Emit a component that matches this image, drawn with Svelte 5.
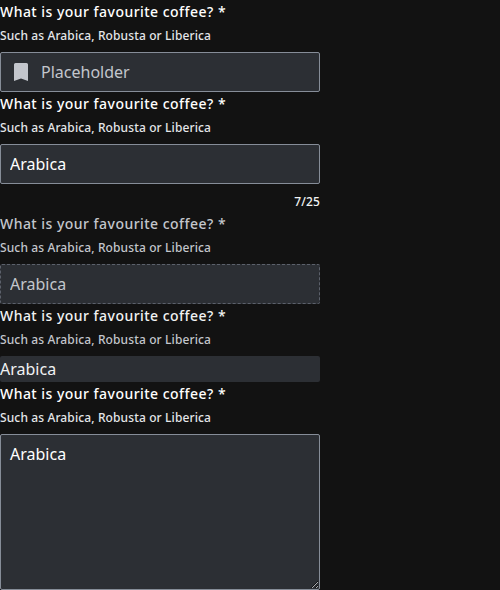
<script>
  const label = 'What is your favourite coffee?';
  const hint = 'Such as Arabica, Robusta or Liberica';
</script>

{#snippet heading()}
  <span class="label">{label} *</span>
  <span class="hint">{hint}</span>
{/snippet}

<main>
  <label class="field">
    {@render heading()}
    <span class="box">
      <svg width="24" height="24" viewBox="0 0 24 24"><path d="M17.5 3h-11Q5 3 5 4.500V21l7-2.500 7 2.500V4.500Q19 3 17.500 3z" fill="currentColor" /></svg>
      <input placeholder="Placeholder" />
    </span>
  </label>
  <label class="field counted">
    {@render heading()}
    <span class="box"><input value="Arabica" /></span>
    <span class="count">7/25</span>
  </label>
  <label class="field disabled">
    {@render heading()}
    <span class="box"><input value="Arabica" disabled /></span>
  </label>
  <label class="field readonly">
    {@render heading()}
    <span class="box"><input value="Arabica" readonly /></span>
  </label>
  <label class="field">
    {@render heading()}
    <textarea>Arabica</textarea>
  </label>
</main>

<style>
  :global(body) {
    background: #121212;
    overflow: hidden;
  }
  main {
    width: 320px;
    font-family: 'Noto Sans', sans-serif;
    color: #fff;
  }
  .field {
    display: flex;
    flex-direction: column;
  }
  .label {
    font-size: 14px;
    font-weight: 500;
    line-height: 24px;
    letter-spacing: 0.47px;
  }
  .hint {
    font-size: 12px;
    font-weight: 500;
    line-height: 18px;
    letter-spacing: 0.12px;
    margin: 3px 0 7px;
    color: #e4e6e9;
  }
  .box {
    display: flex;
    align-items: center;
    box-sizing: border-box;
    height: 40px;
    padding: 0 9px;
    border: 1px solid #868d98;
    border-radius: 2px;
    background: #2c2f34;
  }
  svg {
    flex: none;
    margin: 0 8px 0 -1px;
    color: #c3c6cc;
  }
  input {
    flex: 1;
    min-width: 0;
    padding: 0;
    border: 0;
    outline: 0;
    background: none;
    color: inherit;
    font: 400 16px/24px 'Noto Sans', sans-serif;
  }
  input::placeholder {
    color: #c3c6cc;
    opacity: 1;
  }
  .counted {
    height: 120px;
  }
  .count {
    margin-top: 9px;
    text-align: right;
    font-size: 12px;
    font-weight: 500;
    line-height: 18px;
    letter-spacing: 0.12px;
    color: #f1f2f3;
  }
  .disabled .label,
  .disabled .hint,
  .readonly .hint,
  .disabled input {
    color: #c3c6cc;
  }
  .disabled .box {
    border: 1px dashed #5c616b;
  }
  .readonly .label,
  .readonly input {
    color: #f1f2f3;
  }
  .readonly .box {
    height: 26px;
    padding: 0;
    border: 0;
  }
  textarea {
    box-sizing: border-box;
    width: 320px;
    height: 156px;
    margin: 0;
    padding: 7px 9px;
    border: 1px solid #868d98;
    border-radius: 2px;
    outline: 0;
    background: #2c2f34;
    color: #fff;
    font: 400 16px/24px 'Noto Sans', sans-serif;
    resize: vertical;
  }
</style>
